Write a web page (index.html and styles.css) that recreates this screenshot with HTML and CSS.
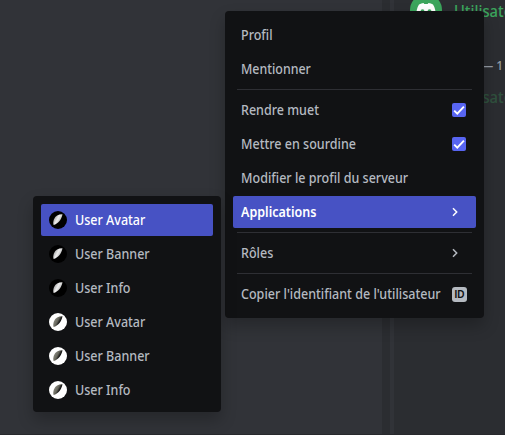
FILE: index.html
```html
<!DOCTYPE html>
<html lang="fr">
<head>
<meta charset="utf-8">
<title>Menu utilisateur</title>
<link rel="stylesheet" href="styles.css">
</head>
<body>
<svg class="defs" width="0" height="0">
  <defs>
    <linearGradient id="light" x1="0" y1="0.2" x2="1" y2="0.8"><stop offset="0" stop-color="#888"/><stop offset=".45" stop-color="#eee"/><stop offset="1" stop-color="#999"/></linearGradient>
    <linearGradient id="dark" x1="0" y1="0.2" x2="1" y2="0.8"><stop offset="0" stop-color="#99998f"/><stop offset=".45" stop-color="#66665c"/><stop offset=".65" stop-color="#111"/></linearGradient>
    <symbol id="feather" viewBox="0 0 18 18"><path d="M13.500 3.300C9.500 3.200 6.300 5 5 8.300 4.200 10.500 4 12.300 4.600 14 9 13 12.500 8.500 13.500 3.300Z"/></symbol>
    <symbol id="check" viewBox="0 0 14 14"><path d="M2.200 7.600 5.300 10.600 11.900 3.700" fill="none" stroke="#fff" stroke-width="1.900"/></symbol>
    <symbol id="chevron" viewBox="0 0 8 10"><path d="M2 1.300 5.700 5 2 8.700" fill="none" stroke="currentColor" stroke-width="1.500"/></symbol>
  </defs>
</svg>
<div class="app">
  <main class="chat"></main>
  <div class="gutter"></div>
  <div class="track"></div>
  <aside class="members">
    <div class="member">
      <svg class="avatar" viewBox="0 0 32 32"><circle cx="16" cy="16" r="16" fill="#3ba55c"/><path d="M9 10.500Q11.500 9 13.500 9L14.300 10Q16 9.800 17.700 10L18.500 9Q21 9 23 10.500 26 15 25.500 22H6.500Q6 15 9 10.500Z" fill="#fff"/><ellipse cx="12.500" cy="17.500" rx="2" ry="2.300" fill="#3ba55c"/><ellipse cx="19.500" cy="17.500" rx="2" ry="2.300" fill="#3ba55c"/></svg>
      <span class="name">Utilisateur</span>
    </div>
    <div class="group">HORS LIGNE — 1</div>
    <div class="member faded"><span class="name">Utilisateur</span></div>
  </aside>
</div>

<div class="menu main-menu">
  <div class="item"><span>Profil</span></div>
  <div class="item"><span class="tight">Mentionner</span></div>
  <hr>
  <div class="item"><span>Rendre muet</span><svg class="box"><use href="#check"/></svg></div>
  <div class="item"><span>Mettre en sourdine</span><svg class="box"><use href="#check"/></svg></div>
  <div class="item"><span>Modifier le profil du serveur</span></div>
  <div class="item active"><span>Applications</span><svg class="chev"><use href="#chevron"/></svg></div>
  <hr>
  <div class="item"><span>Rôles</span><svg class="chev"><use href="#chevron"/></svg></div>
  <hr>
  <div class="item"><span>Copier l'identifiant de l'utilisateur</span><b class="id">ID</b></div>
</div>

<div class="menu sub-menu">
  <div class="item active"><svg class="app-icon black"><use href="#feather"/></svg><span>User Avatar</span></div>
  <div class="item"><svg class="app-icon black"><use href="#feather"/></svg><span>User Banner</span></div>
  <div class="item"><svg class="app-icon black"><use href="#feather"/></svg><span>User Info</span></div>
  <div class="item"><svg class="app-icon white"><use href="#feather"/></svg><span>User Avatar</span></div>
  <div class="item"><svg class="app-icon white"><use href="#feather"/></svg><span>User Banner</span></div>
  <div class="item"><svg class="app-icon white"><use href="#feather"/></svg><span>User Info</span></div>
</div>
</body>
</html>
```
FILE: styles.css
```css
* { box-sizing: border-box; }
body { margin: 0; height: 435px; overflow: hidden; background: #313338; font-family: "Noto Sans", sans-serif; }
.defs { position: absolute; }
.app { display: flex; height: 435px; border-bottom: 1px solid #28292d; }
.chat { width: 382px; background: #313338; }
.gutter { width: 8px; background: #2b2d31; }
.track { width: 4px; background: #313338; }
.members { flex: 1; min-width: 0; padding-left: 16px; background: #2b2d31; overflow: hidden; white-space: nowrap; }
.member { display: flex; align-items: center; gap: 12px; height: 32px; margin-top: -6px; }
.avatar { width: 32px; height: 32px; flex: none; }
.name { color: #3ba55c; font-size: 16px; font-weight: 500; line-height: 20px; transform: scaleX(.92); transform-origin: left; }
.member .name { margin-top: 1px; }
.group { margin: 31px 0 0 -3px; font-size: 12px; font-weight: 500; line-height: 18px; color: #949ba4; }
.member.faded { margin-top: 5px; padding-left: 44px; opacity: .3; }

.menu { position: absolute; background: #111214; border-radius: 4px; box-shadow: 0 8px 16px rgba(0, 0, 0, .24); }
.main-menu { left: 225px; top: 11px; width: 259px; height: 307px; padding: 8px; }
.sub-menu { left: 33px; top: 196px; width: 188px; height: 216px; padding: 8px; }
.item { display: flex; align-items: center; height: 32px; padding: 0 8px; border-radius: 2px; color: #b5bac1; font-size: 14px; font-weight: 500; line-height: 18px; white-space: nowrap; }
.item span { flex: 1 1 0; min-width: 0; transform: scaleX(.895); transform-origin: left; }
.item .tight { transform: scaleX(.885); }
.item + .item { margin-top: 2px; }
.item.active { background: #4752c4; color: #fff; }
.main-menu .active { font-weight: 600; }
hr { height: 1px; margin: 4px; border: 0; background: #2e2f34; }
.box { width: 14px; height: 14px; margin-right: 2px; border-radius: 2px; background: #5865f2; }
.chev { width: 8px; height: 10px; margin-right: 9px; }
.id { flex: none; width: 15px; height: 15px; margin-right: 1px; border-radius: 3px; background: #b5bac1; color: #111214; font-family: "Liberation Sans", sans-serif; font-size: 10px; line-height: 15px; text-align: center; }
.app-icon { width: 18px; height: 18px; margin-right: 8px; border-radius: 50%; }
.black { background: #000; fill: url(#light); }
.white { background: #fff; fill: url(#dark); }
```
